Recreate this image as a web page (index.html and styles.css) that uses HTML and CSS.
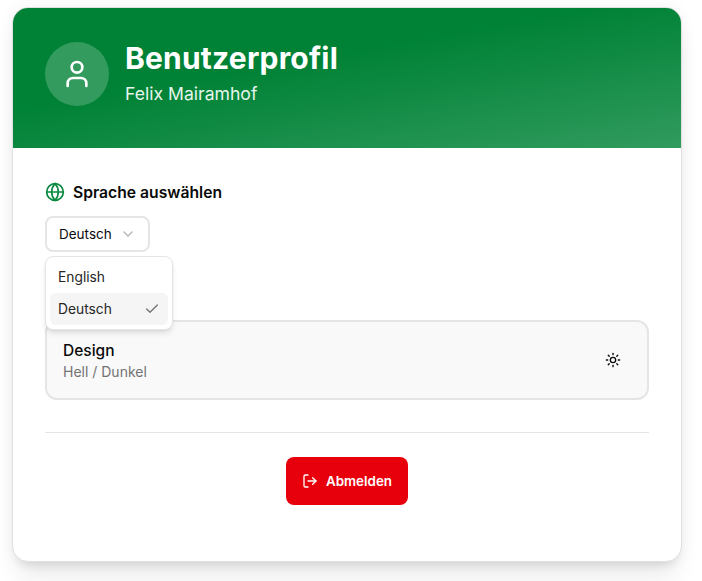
FILE: index.html
```html
<!DOCTYPE html>
<html lang="de">
<head>
  <meta charset="UTF-8">
  <meta name="viewport" content="width=device-width, initial-scale=1.0">
  <title>Benutzerprofil</title>
  <link rel="stylesheet" href="styles.css">
</head>
<body>
  <div class="card">
    <header class="card-header">
      <div class="avatar">
        <svg width="32" height="32" viewBox="0 0 24 24" fill="none" stroke="currentColor" stroke-width="2" stroke-linecap="round" stroke-linejoin="round">
          <path d="M19 21v-2a4 4 0 0 0-4-4H9a4 4 0 0 0-4 4v2"/>
          <circle cx="12" cy="7" r="4"/>
        </svg>
      </div>
      <div class="header-text">
        <h1>Benutzerprofil</h1>
        <p>Felix Mairamhof</p>
      </div>
    </header>

    <main class="card-body">
      <section class="language">
        <h2 class="section-title">
          <svg width="20" height="20" viewBox="0 0 24 24" fill="none" stroke="currentColor" stroke-width="2" stroke-linecap="round" stroke-linejoin="round">
            <circle cx="12" cy="12" r="10"/>
            <path d="M12 2a14.5 14.5 0 0 0 0 20 14.5 14.5 0 0 0 0-20"/>
            <path d="M2 12h20"/>
          </svg>
          Sprache auswählen
        </h2>
        <button class="select-trigger">
          Deutsch
          <svg width="16" height="16" viewBox="0 0 24 24" fill="none" stroke="currentColor" stroke-width="2" stroke-linecap="round" stroke-linejoin="round">
            <path d="m6 9 6 6 6-6"/>
          </svg>
        </button>
        <div class="select-menu">
          <div class="select-item">English</div>
          <div class="select-item active">
            Deutsch
            <svg width="16" height="16" viewBox="0 0 24 24" fill="none" stroke="currentColor" stroke-width="2" stroke-linecap="round" stroke-linejoin="round">
              <path d="M20 6 9 17l-5-5"/>
            </svg>
          </div>
        </div>
      </section>

      <section class="design-row">
        <div class="design-text">
          <div class="design-title">Design</div>
          <div class="design-sub">Hell / Dunkel</div>
        </div>
        <button class="theme-toggle">
          <svg width="16" height="16" viewBox="0 0 24 24" fill="none" stroke="currentColor" stroke-width="2" stroke-linecap="round" stroke-linejoin="round">
            <circle cx="12" cy="12" r="4"/>
            <path d="M12 2v2"/><path d="M12 20v2"/>
            <path d="m4.93 4.93 1.41 1.41"/><path d="m17.66 17.66 1.41 1.41"/>
            <path d="M2 12h2"/><path d="M20 12h2"/>
            <path d="m6.34 17.66-1.41 1.41"/><path d="m19.07 4.93-1.41 1.41"/>
          </svg>
        </button>
      </section>

      <hr class="divider">

      <div class="actions">
        <button class="logout">
          <svg width="16" height="16" viewBox="0 0 24 24" fill="none" stroke="currentColor" stroke-width="2" stroke-linecap="round" stroke-linejoin="round">
            <path d="M9 21H5a2 2 0 0 1-2-2V5a2 2 0 0 1 2-2h4"/>
            <path d="m16 17 5-5-5-5"/>
            <path d="M21 12H9"/>
          </svg>
          Abmelden
        </button>
      </div>
    </main>
  </div>
</body>
</html>
```

FILE: styles.css
```css
/* Base */
body {
  box-sizing: border-box;
  min-height: 100vh;
  margin: 0;
  padding: 7px 20px 0 12px;
  background: #fff;
  color: #0a0a0a;
  font-family: Inter, "Liberation Sans", sans-serif;
}

button {
  font-family: inherit;
  cursor: pointer;
}

/* Card */
.card {
  width: 668px;
  height: 553px;
  border: 1px solid #e0e0e0;
  border-radius: 16px;
  background: #fff;
  overflow: hidden;
  box-shadow: 0 20px 25px -5px rgba(0, 0, 0, 0.08), 0 8px 10px -6px rgba(0, 0, 0, 0.1), 0 0 16px rgba(0, 0, 0, 0.05);
}

.card-header {
  display: flex;
  align-items: center;
  gap: 16px;
  height: 140px;
  box-sizing: border-box;
  padding: 0 32px 8px;
  background: linear-gradient(170deg, #008236 0%, #008236 40%, #319b5e 100%);
  color: #fff;
}

.avatar {
  display: flex;
  align-items: center;
  justify-content: center;
  width: 64px;
  height: 64px;
  border-radius: 50%;
  background: rgba(255, 255, 255, 0.2);
}

.header-text {
  padding-bottom: 3px;
}

.header-text h1 {
  margin: 0 0 6px;
  font-size: 30px;
  line-height: 36px;
  font-weight: 700;
  letter-spacing: 0.2px;
}

.header-text p {
  margin: 0;
  font-size: 17.6px;
  line-height: 24px;
  color: #e6f6ec;
}

.card-body {
  padding: 32px;
}

/* Language select */
.language {
  position: relative;
  margin-bottom: 68px;
}

.section-title {
  display: flex;
  align-items: center;
  gap: 8px;
  margin: 0 0 12px;
  height: 24px;
  font-size: 15.7px;
  font-weight: 600;
}

.section-title svg {
  color: #0a8a40;
}

.select-trigger {
  display: flex;
  align-items: center;
  gap: 8px;
  height: 36px;
  padding: 0 12px;
  border: 2px solid #e5e5e5;
  border-radius: 8px;
  background: #fff;
  color: #0a0a0a;
  font-size: 13.5px;
}

.select-trigger svg {
  color: #b5b5b5;
}

.select-menu {
  position: absolute;
  top: 76px;
  left: 0;
  width: 118px;
  padding: 4px;
  border: 1px solid #e5e5e5;
  border-radius: 8px;
  background: #fff;
  box-shadow: 0 4px 6px -1px rgba(0, 0, 0, 0.1), 0 2px 4px -2px rgba(0, 0, 0, 0.1);
  z-index: 2;
}

.select-item {
  display: flex;
  align-items: center;
  justify-content: space-between;
  height: 32px;
  padding: 0 8px;
  border-radius: 6px;
  font-size: 13.8px;
  color: #262626;
}

.select-item.active {
  background: #f5f5f5;
}

.select-item svg {
  color: #737373;
}

/* Design row */
.design-row {
  display: flex;
  align-items: center;
  justify-content: space-between;
  height: 80px;
  box-sizing: border-box;
  padding: 0 26px 0 16px;
  border: 2px solid #e5e5e5;
  border-radius: 12px;
  background: #f9f9f9;
}

.design-text {
  padding-top: 2px;
}

.design-title {
  font-size: 15.5px;
  font-weight: 500;
  line-height: 20px;
  margin-bottom: 2px;
}

.design-sub {
  font-size: 14px;
  line-height: 18px;
  color: #737373;
}

.theme-toggle {
  display: flex;
  padding: 0;
  border: 0;
  background: none;
  color: #0a0a0a;
}

.divider {
  margin: 32px 0 24px;
  border: 0;
  border-top: 1px solid #e5e5e5;
}

/* Logout */
.actions {
  display: flex;
  justify-content: center;
}

.logout {
  display: flex;
  align-items: center;
  gap: 8px;
  height: 48px;
  padding: 0 16px;
  border: 0;
  border-radius: 8px;
  background: #e7000b;
  color: #fff;
  font-size: 13.4px;
  font-weight: 600;
}
```
